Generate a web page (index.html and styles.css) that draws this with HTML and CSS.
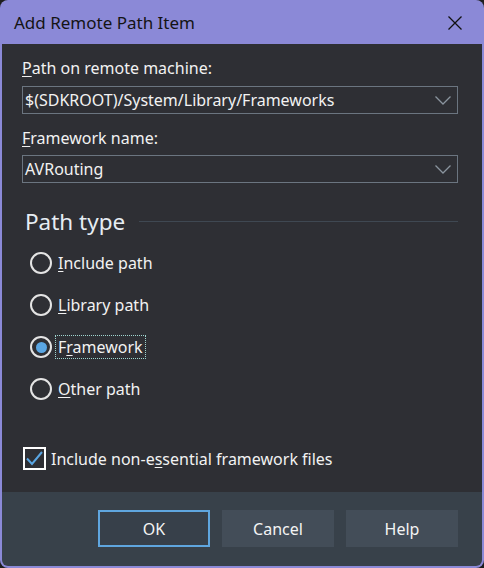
FILE: index.html
```html
<!DOCTYPE html>
<html lang="en">
<head>
    <meta charset="utf-8">
    <title>Add Remote Path Item</title>
    <link rel="stylesheet" href="styles.css">
</head>
<body>
    <div class="window">
        <div class="titlebar">
            <span class="title">Add Remote Path Item</span>
            <svg class="close" width="14" height="14" viewBox="0 0 14 14">
                <path d="M0.5 0.5 L13.5 13.5 M13.5 0.5 L0.5 13.5" stroke="#111" stroke-width="1.3" fill="none"/>
            </svg>
        </div>

        <div class="content">
            <label class="field-label"><u>P</u>ath on remote machine:</label>
            <div class="combo">
                <span>$(SDKROOT)/System/Library/Frameworks</span>
                <svg class="chevron" width="16" height="9" viewBox="0 0 16 9"><path d="M0.5 0.5 L8 8 L15.5 0.5" stroke="#8a949e" stroke-width="1.3" fill="none"/></svg>
            </div>

            <label class="field-label"><u>F</u>ramework name:</label>
            <div class="combo">
                <span>AVRouting</span>
                <svg class="chevron" width="16" height="9" viewBox="0 0 16 9"><path d="M0.5 0.5 L8 8 L15.5 0.5" stroke="#8a949e" stroke-width="1.3" fill="none"/></svg>
            </div>

            <div class="group-head">
                <span>Path type</span>
                <div class="group-line"></div>
            </div>

            <div class="radio-row"><span class="radio"></span><span class="radio-label"><u>I</u>nclude path</span></div>
            <div class="radio-row"><span class="radio"></span><span class="radio-label"><u>L</u>ibrary path</span></div>
            <div class="radio-row"><span class="radio checked"></span><span class="radio-label focused">F<u>r</u>amework</span></div>
            <div class="radio-row"><span class="radio"></span><span class="radio-label"><u>O</u>ther path</span></div>

            <div class="check-row">
                <span class="checkbox">
                    <svg width="19" height="19" viewBox="0 0 19 19"><path d="M2 9.5 L7 15 L17 3" stroke="#5aa6e3" stroke-width="2" fill="none"/></svg>
                </span>
                <span>Include non-e<u>s</u>sential framework files</span>
            </div>
        </div>

        <div class="footer">
            <button class="btn default">OK</button>
            <button class="btn">Cancel</button>
            <button class="btn">Help</button>
        </div>
    </div>
</body>
</html>
```

FILE: styles.css
```css
body {
    margin: 0;
    background-color: #1e1e1e;
    font-family: "Noto Sans", "Open Sans", sans-serif;
    font-size: 16px;
    color: #f2f2f2;
}
u {
    text-decoration-thickness: 1px;
    text-underline-offset: 2px;
}
.window {
    width: 484px;
    height: 568px;
    box-sizing: border-box;
    background-color: #8b89d7;
    border-radius: 8px;
    padding: 0 2px 2px 2px;
    display: flex;
    flex-direction: column;
    overflow: hidden;
}
.titlebar {
    height: 44px;
    flex-shrink: 0;
    display: flex;
    align-items: center;
    justify-content: space-between;
    padding: 0 20px 0 12px;
}
.title {
    color: #141414;
    font-size: 17px;
}
.close {
    margin-top: 2px;
}
.content {
    flex: 1;
    background-color: #2e2f34;
    padding: 14px 24px 0 20px;
    display: flex;
    flex-direction: column;
}
.field-label {
    line-height: 20px;
    margin-bottom: 8px;
}
.combo {
    height: 28px;
    box-sizing: border-box;
    border: 1px solid #6b7580;
    display: flex;
    align-items: center;
    justify-content: space-between;
    padding: 0 6px 0 2px;
    margin-bottom: 14px;
}
.combo + .field-label {
    margin-bottom: 7px;
}
.group-head {
    display: flex;
    align-items: center;
    gap: 14px;
    margin-top: 9px;
    padding-left: 3px;
    height: 30px;
}
.group-head span {
    font-size: 22.5px;
    color: #e6edf3;
}
.group-line {
    flex: 1;
    height: 1px;
    background-color: #3f4852;
    margin-top: 1px;
}
.radio-row {
    height: 42px;
    display: flex;
    align-items: center;
    padding-left: 8px;
}
.group-head + .radio-row {
    margin-top: 6px;
}
.radio {
    width: 22px;
    height: 22px;
    box-sizing: border-box;
    border: 2px solid #e4e4e4;
    border-radius: 50%;
    display: flex;
    align-items: center;
    justify-content: center;
    margin-right: 5px;
}
.radio.checked::after {
    content: "";
    width: 11px;
    height: 11px;
    border-radius: 50%;
    background-color: #5aa6e3;
}
.radio-label {
    line-height: 20px;
    padding: 0 1px;
}
.radio-label.focused {
    outline: 1px dotted #9fd6d0;
    outline-offset: 1px;
}
.check-row {
    display: flex;
    align-items: center;
    margin-top: 37px;
    padding-left: 1px;
}
.checkbox {
    width: 23px;
    height: 23px;
    box-sizing: border-box;
    border: 2px solid #ffffff;
    display: flex;
    align-items: center;
    justify-content: center;
    margin-right: 5px;
}
.footer {
    height: 74px;
    flex-shrink: 0;
    background-color: #38414a;
    display: flex;
    justify-content: flex-end;
    gap: 12px;
    padding: 18px 24px 0 0;
    box-sizing: border-box;
    border-bottom-left-radius: 6px;
    border-bottom-right-radius: 6px;
}
.btn {
    width: 112px;
    height: 37px;
    border: none;
    background-color: #434d58;
    color: #f4f4f4;
    font-family: "Noto Sans", "Open Sans", sans-serif;
    font-size: 16px;
}
.btn.default {
    background-color: #37404a;
    border: 2px solid #5fa6df;
}
```
